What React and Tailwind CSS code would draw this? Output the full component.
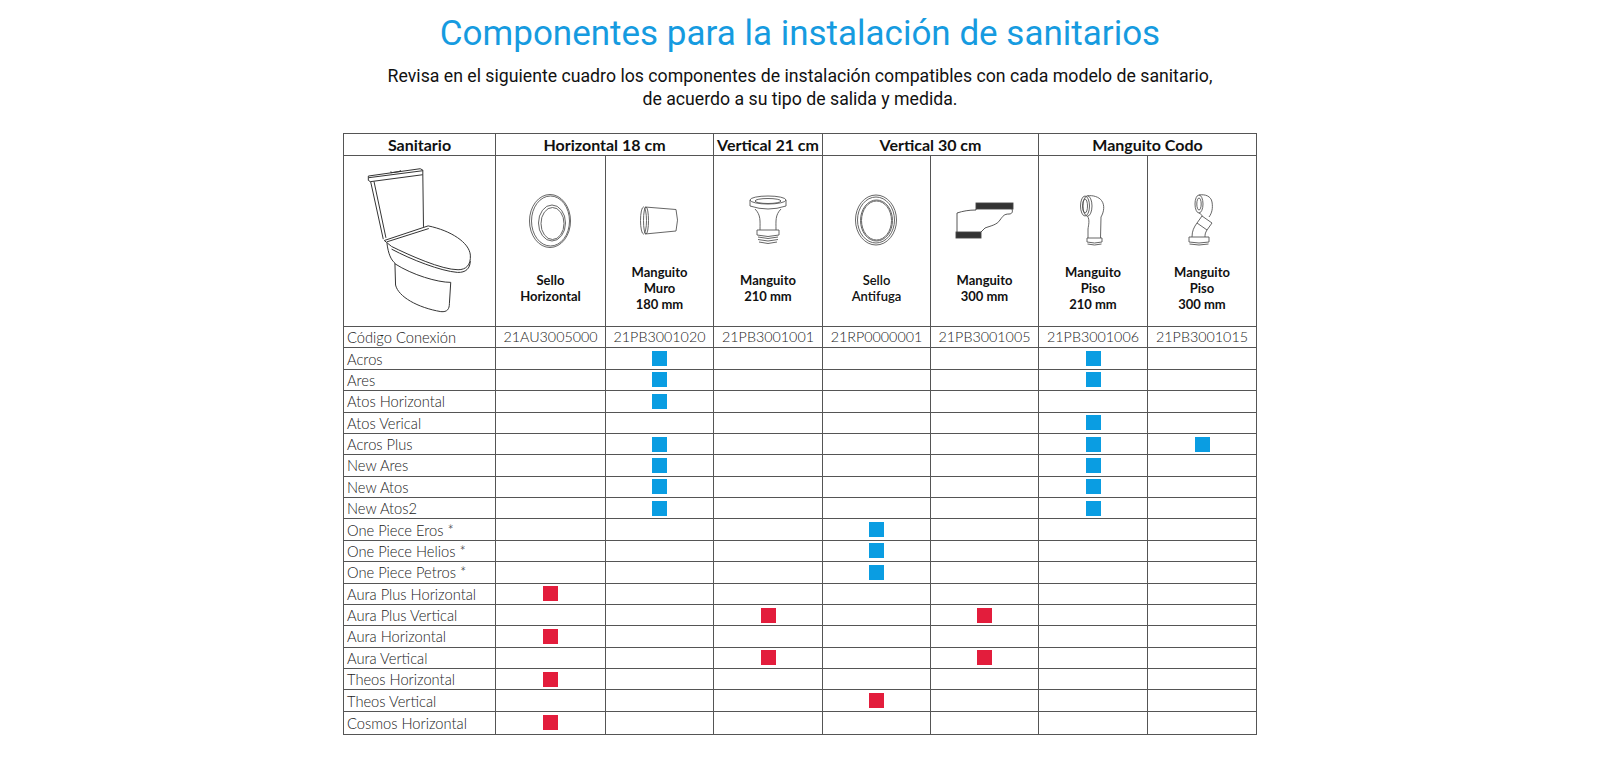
import React from 'react';

function Toilet() {
  return (
    <svg width="108" height="148" viewBox="75 35 325 445" fill="none" stroke="#333" strokeWidth="3" strokeLinejoin="round">
      {/* lid of the tank */}
      <path d="M82,62 L238,40 L246,44 L246,58 L88,79 L82,75 Z" />
      <path d="M83,67 L246,46" />
      <path d="M150,48 L150,52 L178,48 L178,44" />
      {/* tank body */}
      <path d="M89,79 L127,252" />
      <path d="M99,78 L135,248" />
      <path d="M246,58 L248,215" />
      {/* seat and cover */}
      <path d="M130,256 L262,212 C330,226 386,262 389,300 C391,330 376,344 352,344 C302,344 205,300 152,274 Z" />
      <path d="M138,260 L264,220" />
      <path d="M152,282 C212,314 300,348 350,352 C376,353 388,340 389,318" />
      {/* bowl */}
      <path d="M138,264 C142,296 150,314 162,324 L164,390 C172,425 230,458 300,470 C320,472 326,462 326,445 L330,382" />
      <path d="M162,326 C215,360 290,382 330,382" />
    </svg>
  );
}

function SelloHorizontal() {
  return (
    <svg width="46" height="56" viewBox="0 0 46 56" fill="none" stroke="#555" strokeWidth="0.9">
      <ellipse cx="22" cy="28" rx="20.5" ry="26.5" />
      <ellipse cx="22.5" cy="28" rx="19" ry="25" />
      <ellipse cx="24" cy="30" rx="13.5" ry="18" />
      <ellipse cx="24.5" cy="30.5" rx="11.5" ry="16" />
    </svg>
  );
}

function ManguitoMuro() {
  return (
    <svg width="42" height="32" viewBox="0 0 42 32" fill="none" stroke="#555" strokeWidth="0.9">
      <path d="M6,2 L37,4.5 Q40,15 37,26 L6,29" />
      <ellipse cx="4.5" cy="15.5" rx="3" ry="13.5" />
      <ellipse cx="7" cy="15.5" rx="2.5" ry="13.5" />
    </svg>
  );
}

function Manguito210() {
  return (
    <svg width="40" height="52" viewBox="0 0 40 52" fill="none" stroke="#555" strokeWidth="0.9">
      <ellipse cx="20" cy="5" rx="18" ry="4" />
      <ellipse cx="20" cy="6" rx="13" ry="2.5" />
      <path d="M2,5 L2,11 Q20,17 38,11 L38,5" />
      <path d="M7,14 C13,20 12,26 12,35 M33,14 C27,20 28,26 28,35" />
      <path d="M9,35 L31,35 L31,40 Q20,43 9,40 Z" />
      <path d="M10,42 Q20,45 30,42 M10,44.5 Q20,47.5 30,44.5 M11,47 Q20,50 29,47" />
    </svg>
  );
}

function SelloAntifuga() {
  return (
    <svg width="46" height="54" viewBox="0 0 46 54" fill="none" stroke="#555" strokeWidth="0.9">
      <ellipse cx="22" cy="26" rx="20.5" ry="25" />
      <ellipse cx="22" cy="26" rx="18.5" ry="23" />
      <ellipse cx="22.5" cy="26.5" rx="16" ry="20.5" />
      <ellipse cx="22.5" cy="26.5" rx="15" ry="19.5" />
    </svg>
  );
}

function Manguito300() {
  return (
    <svg width="60" height="40" viewBox="0 0 60 40" fill="none" stroke="#444" strokeWidth="0.9">
      <rect x="21" y="2" width="37" height="6" fill="#333" />
      <rect x="1" y="31" width="25" height="6" fill="#333" />
      <path d="M21,8 L21,9 C14,9 8,10 2,12 L2,31" />
      <path d="M57,8 C58,11 57,13 54,13 C49,13 48,15 45,19 C42,24 35,25 30,27 L26,31" />
    </svg>
  );
}

function Piso210() {
  return (
    <svg width="28" height="52" viewBox="0 0 28 52" fill="none" stroke="#555" strokeWidth="0.9">
      <ellipse cx="6" cy="11" rx="4.5" ry="10" />
      <ellipse cx="6" cy="11" rx="2.5" ry="7" />
      <ellipse cx="8.5" cy="11" rx="4.5" ry="10.2" />
      <path d="M8.5,0.8 C14,0 20,2 22.5,5.5 C26,10 25,17 22,22 L21.5,43" />
      <path d="M8.5,21.2 C11,25 9.5,30 9,34 L9,43" />
      <path d="M8,43 L23,43 L23,47 Q15.5,49 8,47 Z" />
      <path d="M8.5,49 Q15.5,51 22.5,49" />
    </svg>
  );
}

function Piso300() {
  return (
    <svg width="34" height="56" viewBox="0 0 34 56" fill="none" stroke="#555" strokeWidth="0.9">
      <ellipse cx="14" cy="11" rx="4" ry="9" />
      <ellipse cx="14" cy="11" rx="2.2" ry="6" />
      <path d="M14,2 C20,1 26,3 27,9 C28,15 27,20 24,24" />
      <path d="M14,20 C16,21 17,22 17,23" />
      <path d="M17,23 L27,30 L22,37 L12,30 Z" />
      <path d="M12,30 C9,34 7,38 7,44 M22,37 C20,40 20,42 20,44" />
      <path d="M4,44 L24,44 L24,49 Q14,51 4,49 Z" />
      <path d="M4.5,51 Q14,53 23.5,51" />
    </svg>
  );
}

const products = [
  { icon: <SelloHorizontal />, label: ['Sello', 'Horizontal'], code: '21AU3005000' },
  { icon: <ManguitoMuro />, label: ['Manguito', 'Muro', '180 mm'], code: '21PB3001020' },
  { icon: <Manguito210 />, label: ['Manguito', '210 mm'], code: '21PB3001001' },
  { icon: <SelloAntifuga />, label: ['Sello', 'Antifuga'], code: '21RP0000001', light: true },
  { icon: <Manguito300 />, label: ['Manguito', '300 mm'], code: '21PB3001005' },
  { icon: <Piso210 />, label: ['Manguito', 'Piso', '210 mm'], code: '21PB3001006' },
  { icon: <Piso300 />, label: ['Manguito', 'Piso', '300 mm'], code: '21PB3001015' },
];

// b = azul, r = rojo ; index = columna de producto (1..7)
const rows = [
  ['Acros', { 2: 'b', 6: 'b' }],
  ['Ares', { 2: 'b', 6: 'b' }],
  ['Atos Horizontal', { 2: 'b' }],
  ['Atos Verical', { 6: 'b' }],
  ['Acros Plus', { 2: 'b', 6: 'b', 7: 'b' }],
  ['New Ares', { 2: 'b', 6: 'b' }],
  ['New Atos', { 2: 'b', 6: 'b' }],
  ['New Atos2', { 2: 'b', 6: 'b' }],
  ['One Piece Eros *', { 4: 'b' }],
  ['One Piece Helios *', { 4: 'b' }],
  ['One Piece Petros *', { 4: 'b' }],
  ['Aura Plus Horizontal', { 1: 'r' }],
  ['Aura Plus Vertical', { 3: 'r', 5: 'r' }],
  ['Aura Horizontal', { 1: 'r' }],
  ['Aura Vertical', { 3: 'r', 5: 'r' }],
  ['Theos Horizontal', { 1: 'r' }],
  ['Theos Vertical', { 4: 'r' }],
  ['Cosmos Horizontal', { 1: 'r' }],
];

const cell = 'border-r border-b border-[#555]';

export default function App() {
  return (
    <div className="min-h-[768px] bg-white pt-[14px]">
      <h1 className="text-center text-[35px] leading-[40px] text-[#169be0]" style={{ fontFamily: 'Roboto, sans-serif' }}>
        Componentes para la instalación de sanitarios
      </h1>
      <p className="mt-[11px] text-center text-[17.7px] leading-[22.5px] text-[#111]" style={{ fontFamily: 'Roboto, sans-serif' }}>
        Revisa en el siguiente cuadro los componentes de instalación compatibles con cada modelo de sanitario,
        <br />
        de acuerdo a su tipo de salida y medida.
      </p>

      <div
        className="mx-auto mt-[23px] grid w-[914px] grid-cols-[152px_110px_108px_109px_108px_108px_109px_109px] grid-rows-[22px_171px_repeat(18,21.39px)_23px] border-t border-l border-[#555] text-[#222]"
        style={{ fontFamily: 'Lato, "Open Sans", sans-serif' }}
      >
        {/* encabezado */}
        <div className={`${cell} flex items-center justify-center text-[16px] font-bold text-[#111]`}>Sanitario</div>
        <div className={`${cell} col-span-2 flex items-center justify-center text-[16px] font-bold text-[#111]`}>Horizontal 18 cm</div>
        <div className={`${cell} flex items-center justify-center text-[16px] font-bold text-[#111]`}>Vertical 21 cm</div>
        <div className={`${cell} col-span-2 flex items-center justify-center text-[16px] font-bold text-[#111]`}>Vertical 30 cm</div>
        <div className={`${cell} col-span-2 flex items-center justify-center text-[16px] font-bold text-[#111]`}>Manguito Codo</div>

        {/* imágenes */}
        <div className={`${cell} flex items-center justify-center`}>
          <Toilet />
        </div>
        {products.map((p, i) => (
          <div key={i} className={`${cell} flex flex-col items-center pt-[35px]`}>
            <div className="flex h-[60px] items-center justify-center">{p.icon}</div>
            <div className={`mt-[12px] flex h-[49px] flex-col items-center justify-center text-center text-[13px] leading-[16px] text-[#111] ${p.light ? 'font-semibold' : 'font-bold'}`}>
              {p.label.map((l, j) => (
                <span key={j}>{l}</span>
              ))}
            </div>
          </div>
        ))}

        {/* códigos */}
        <div className={`${cell} flex items-center pl-[3px] text-[14.7px] font-light`}>Código Conexión</div>
        {products.map((p, i) => (
          <div key={i} className={`${cell} flex items-center justify-center text-[14.3px] font-light`}>{p.code}</div>
        ))}

        {/* modelos */}
        {rows.map(([name, marks]) => (
          <React.Fragment key={name}>
            <div className={`${cell} flex items-center pl-[3px] text-[14.7px] font-light`}>{name}</div>
            {products.map((_, i) => (
              <div key={i} className={`${cell} flex items-center justify-center`}>
                {marks[i + 1] === 'b' && <span className="h-[15px] w-[15px] bg-[#0a9de2]" />}
                {marks[i + 1] === 'r' && <span className="h-[15px] w-[15px] bg-[#e31d3c]" />}
              </div>
            ))}
          </React.Fragment>
        ))}
      </div>
    </div>
  );
}
